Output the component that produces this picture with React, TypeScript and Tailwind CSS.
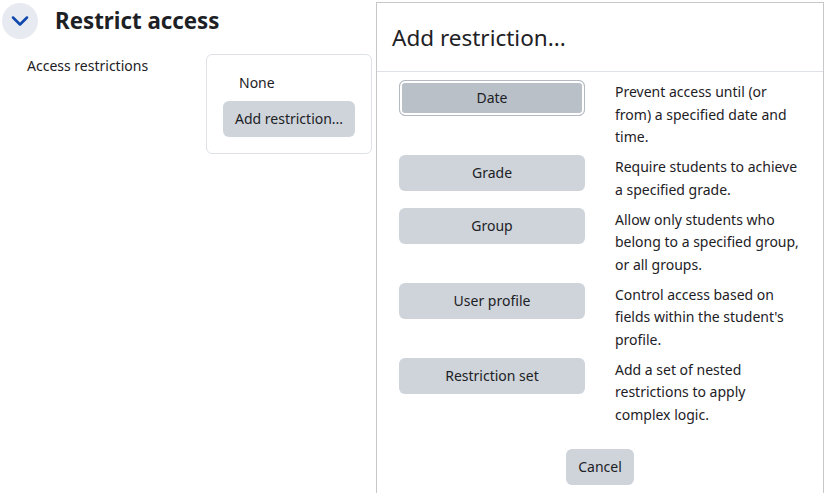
import { ChevronDown } from "lucide-react";

const options = [
  { label: "Date", lines: ["Prevent access until (or", "from) a specified date and", "time."], active: true },
  { label: "Grade", lines: ["Require students to achieve", "a specified grade."] },
  { label: "Group", lines: ["Allow only students who", "belong to a specified group,", "or all groups."] },
  { label: "User profile", lines: ["Control access based on", "fields within the student's", "profile."] },
  { label: "Restriction set", lines: ["Add a set of nested", "restrictions to apply", "complex logic."] },
];

export default function App() {
  return (
    <div
      className="flex w-[827px] h-[493px] overflow-hidden bg-white text-[#1d2125] text-[14px] leading-[22.5px]"
      style={{ fontFamily: '"Noto Sans", "Open Sans", sans-serif' }}
    >
      {/* form section */}
      <div className="w-[376px] shrink-0">
        <div className="flex items-center h-[42px] pl-[2px]">
          <div className="w-9 h-9 rounded-full bg-[#e7ebf1] flex items-center justify-center">
            <ChevronDown className="w-7 h-7 text-[#0f47ad]" strokeWidth={2.2} />
          </div>
          <h3 className="ml-[17px] text-[22.3px] font-bold leading-none">Restrict access</h3>
        </div>
        <div className="flex mt-[12px]">
          <div className="w-[206px] pl-[27px] pt-[1px]">Access restrictions</div>
          <div className="w-[166px] border border-[#dee2e6] rounded-md p-4">
            <div className="ml-4 mb-[6.5px] pt-[1px]">None</div>
            <button className="h-9 px-3 pt-[1px] rounded-md bg-[#ced4da] whitespace-nowrap">Add restriction...</button>
          </div>
        </div>
      </div>

      {/* dialog */}
      <div className="w-[448px] shrink-0 mt-[2px] border-l border-t border-r border-[#c8c8c8] flex flex-col">
        <div className="px-[15px] pt-4 pb-[15px] border-b border-[#dee2e6]">
          <h5 className="text-[22.5px] leading-9 pt-[1px]">Add restriction...</h5>
        </div>
        <div className="pt-2 pl-[22px]">
          {options.map((o) => (
            <div key={o.label} className="flex mb-[6.5px]">
              <button
                className={
                  o.active
                    ? "w-[186px] h-9 shrink-0 pt-[1px] rounded-md bg-[#b9c0c8] border border-[#b4bac1] shadow-[inset_0_0_0_2px_#ffffff]"
                    : "w-[186px] h-9 shrink-0 pt-[1px] rounded-md bg-[#ced4da]"
                }
              >
                {o.label}
              </button>
              <div className="ml-[30px] pt-[1px] whitespace-nowrap">
                {o.lines.map((l) => (
                  <div key={l}>{l}</div>
                ))}
              </div>
            </div>
          ))}
        </div>
        <div className="flex justify-center mt-4">
          <button className="h-9 px-3 pt-[1px] rounded-md bg-[#ced4da]">Cancel</button>
        </div>
      </div>
    </div>
  );
}
